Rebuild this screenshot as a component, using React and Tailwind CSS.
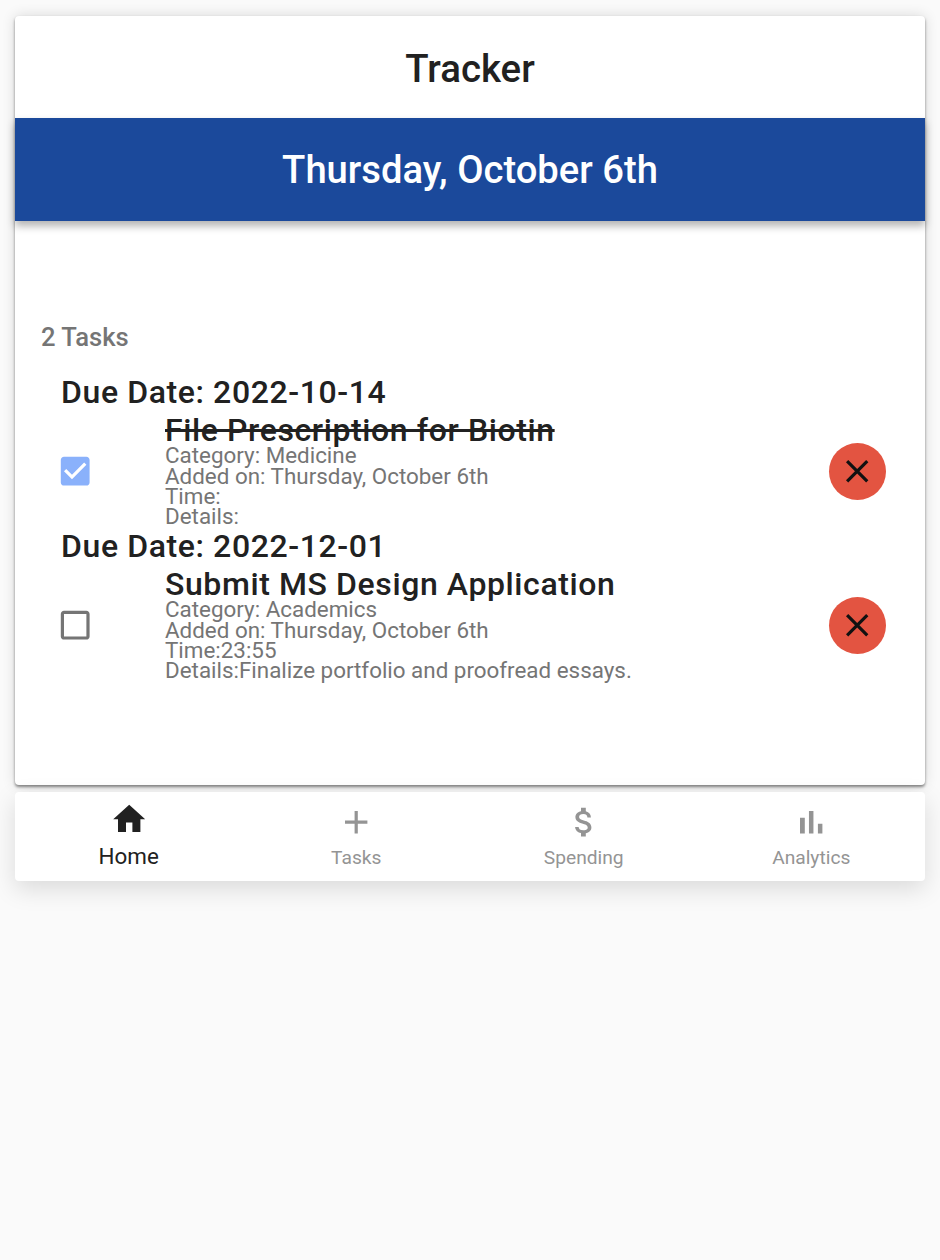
const Icon = ({ d, size = 38, color = "currentColor" }) => (
  <svg width={size} height={size} viewBox="0 0 24 24" fill={color} className="block shrink-0">
    <path d={d} />
  </svg>
);

const CHECKED = "M19 3H5c-1.11 0-2 .9-2 2v14c0 1.1.89 2 2 2h14c1.11 0 2-.9 2-2V5c0-1.1-.89-2-2-2zm-9 14l-5-5 1.41-1.41L10 14.17l7.59-7.59L19 8l-9 9z";
const BLANK = "M19 5v14H5V5h14m0-2H5c-1.1 0-2 .9-2 2v14c0 1.1.9 2 2 2h14c1.1 0 2-.9 2-2V5c0-1.1-.9-2-2-2z";
const CLOSE = "M19 6.41 17.59 5 12 10.59 6.41 5 5 6.41 10.59 12 5 17.59 6.41 19 12 13.41 17.59 19 19 17.59 13.41 12z";
const HOME = "M10 20v-6h4v6h5v-8h3L12 3 2 12h3v8z";
const ADD = "M19 13h-6v6h-2v-6H5v-2h6V5h2v6h6v2z";
const MONEY = "M11.8 10.9c-2.27-.59-3-1.2-3-2.15 0-1.09 1.01-1.85 2.7-1.85 1.78 0 2.44.85 2.5 2.1h2.21c-.07-1.72-1.12-3.3-3.21-3.81V3h-3v2.16c-1.94.42-3.5 1.68-3.5 3.61 0 2.31 1.91 3.46 4.7 4.13 2.5.6 3 1.48 3 2.41 0 .69-.49 1.79-2.7 1.79-2.06 0-2.87-.92-2.98-2.1h-2.2c.12 2.19 1.76 3.42 3.68 3.83V21h3v-2.15c1.95-.37 3.5-1.5 3.5-3.55 0-2.84-2.43-3.81-4.7-4.4z";
const BARS = "M5 9.2h3V19H5zM10.6 5h2.8v14h-2.8zm5.6 8H19v6h-2.8z";

const Task = ({ due, title, done, lines }) => (
  <div>
    <div className="pl-[46px] h-[35px] text-[32px] leading-[34px] font-medium tracking-[0.6px] text-[#212121]">Due Date: {due}</div>
    <div className="flex items-center h-[119px] pl-[41px] pr-[38.8px]">
      <div className="w-[109px] shrink-0 mt-[4px]">
        <Icon d={done ? CHECKED : BLANK} size={38.4} color={done ? "#8ab1fb" : "#757575"} />
      </div>
      <div className="flex-1 min-w-0 self-start pt-[1.7px]">
        <div className={`text-[32px] leading-[36px] mb-[-2.6px] font-medium tracking-[0.6px] text-[#212121] ${done ? "line-through" : ""}`}>{title}</div>
        {lines.map((l) => (
          <div key={l} className="text-[22.4px] leading-[20.4px] text-[#757575]">{l}</div>
        ))}
      </div>
      <div className="w-[57.6px] h-[57.6px] mt-[4px] rounded-full bg-[#e35441] flex items-center justify-center shrink-0">
        <Icon d={CLOSE} size={38.4} color="#111111" />
      </div>
    </div>
  </div>
);

const Nav = ({ d, label, active }) => (
  <div className={`flex-1 flex flex-col items-center ${active ? "text-[#212121] pt-[8px]" : "text-[#949494] pt-[11px]"}`}>
    <Icon d={d} size={38.4} />
    <div className={active ? "text-[22.4px] leading-[26px] mt-[5px]" : "text-[19.2px] leading-[24px] mt-[5px]"}>{label}</div>
  </div>
);

export default function App() {
  return (
    <div className="min-h-[1260px] bg-[#fafafa] px-[15px] pt-[16px] font-['Roboto',sans-serif]">
      <div className="h-[769px] bg-white rounded-[4px] shadow-[0_2px_3px_rgba(0,0,0,0.45),0_0_14px_rgba(0,0,0,0.14)]">
        <div className="h-[102px] pt-[3px] flex items-center justify-center text-[38.4px] font-medium text-[#212121] rounded-t-[4px]">Tracker</div>
        <div className="h-[103px] pt-[3px] bg-[#1b499b] flex items-center justify-center text-[38.2px] font-medium text-white shadow-[0_5px_8px_rgba(0,0,0,0.3)]">Thursday, October 6th</div>
        <div className="pt-[99px] pl-[26px] h-[34px] box-content text-[25.6px] leading-[34px] font-medium text-[#757575]">2 Tasks</div>
        <div className="pt-[21px]">
          <Task due="2022-10-14" title="File Prescription for Biotin" done lines={["Category: Medicine", "Added on: Thursday, October 6th", "Time:", "Details:"]} />
          <Task due="2022-12-01" title="Submit MS Design Application" lines={["Category: Academics", "Added on: Thursday, October 6th", "Time:23:55", "Details:Finalize portfolio and proofread essays."]} />
        </div>
      </div>
      <div className="mt-[7px] h-[89px] bg-white rounded-[4px] flex shadow-[0_8px_24px_rgba(0,0,0,0.13)]">
        <Nav d={HOME} label="Home" active />
        <Nav d={ADD} label="Tasks" />
        <Nav d={MONEY} label="Spending" />
        <Nav d={BARS} label="Analytics" />
      </div>
    </div>
  );
}
